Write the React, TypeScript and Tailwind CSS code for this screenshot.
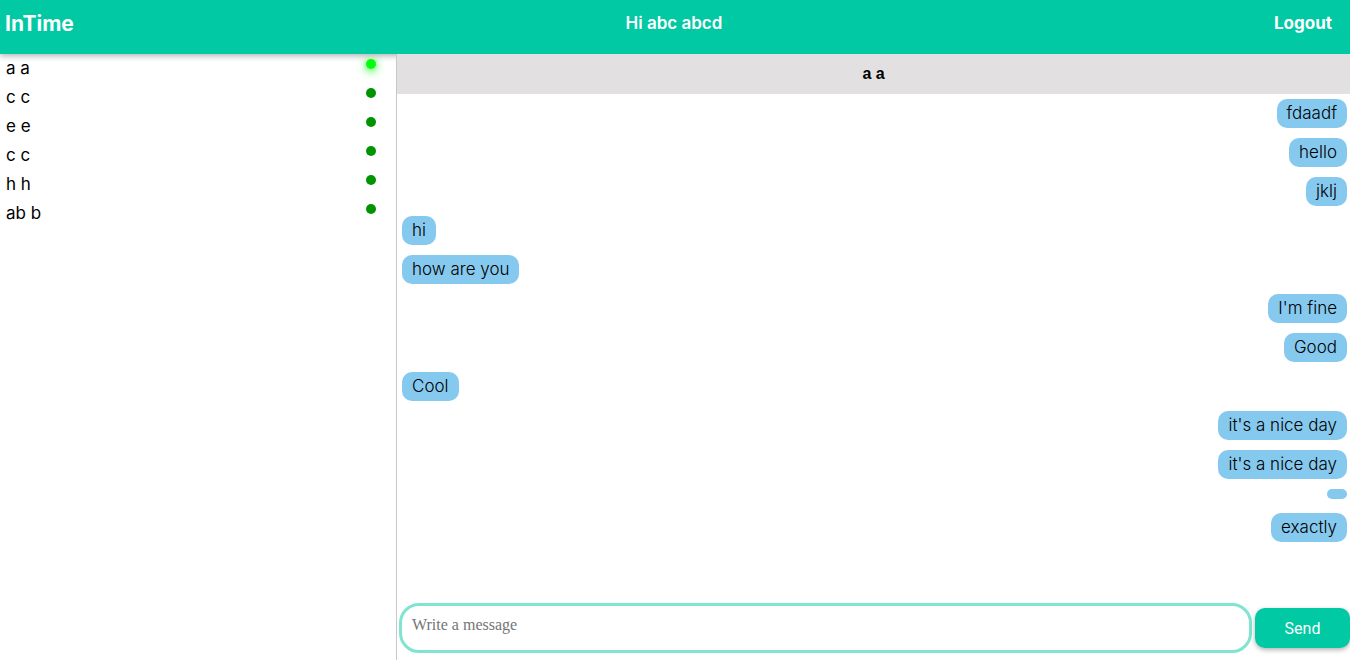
import { useState } from "react";
import type { FormEvent } from "react";

type Contact = { id: number; name: string; online: boolean };
type Message = { id: number; text: string; mine: boolean };

const contacts: Contact[] = [
  { id: 1, name: "a a", online: true },
  { id: 2, name: "c c", online: false },
  { id: 3, name: "e e", online: false },
  { id: 4, name: "c c", online: false },
  { id: 5, name: "h h", online: false },
  { id: 6, name: "ab b", online: false },
];

const initialMessages: Message[] = [
  { id: 1, text: "fdaadf", mine: true },
  { id: 2, text: "hello", mine: true },
  { id: 3, text: "jklj", mine: true },
  { id: 4, text: "hi", mine: false },
  { id: 5, text: "how are you", mine: false },
  { id: 6, text: "I'm fine", mine: true },
  { id: 7, text: "Good", mine: true },
  { id: 8, text: "Cool", mine: false },
  { id: 9, text: "it's a nice day", mine: true },
  { id: 10, text: "it's a nice day", mine: true },
  { id: 11, text: "", mine: true },
  { id: 12, text: "exactly", mine: true },
];

function Header() {
  return (
    <header className="flex h-[54px] shrink-0 items-start justify-between bg-[#00c9a4] pt-3 pr-[18px] pl-[5px] text-white shadow-[0_2px_6px_rgba(0,0,0,0.3)]">
      <h1 className="text-[21px] leading-6 font-bold">InTime</h1>
      <p className="text-[17px] leading-[22px] font-semibold">Hi abc abcd</p>
      <a href="#logout" className="text-[17px] leading-[22px] font-bold">
        Logout
      </a>
    </header>
  );
}

function ContactList() {
  return (
    <nav aria-label="Contacts" className="border-r border-[#c8c8c8]">
      <ul>
        {contacts.map((contact) => (
          <li key={contact.id}>
            <button
              type="button"
              className="flex w-full items-start justify-between py-[5px] pr-5 pl-1.5 text-left text-[17px] leading-[19px] font-normal"
            >
              <span>{contact.name}</span>
              <span
                className={
                  contact.online
                    ? "size-2.5 rounded-full bg-[#00ff0d] shadow-[0_2px_10px_#00ff0d]"
                    : "size-2.5 rounded-full bg-[#009500]"
                }
              />
            </button>
          </li>
        ))}
      </ul>
    </nav>
  );
}

function Bubble({ message }: { message: Message }) {
  return (
    <li className={message.mine ? "flex min-h-3.5 items-start justify-end" : "flex min-h-3.5 items-start"}>
      <p className="rounded-[10px] bg-[#86c9ef] px-2.5 py-[5px] text-[17px] leading-[19px] font-light text-black">
        {message.text}
      </p>
    </li>
  );
}

export default function App() {
  const [messages, setMessages] = useState(initialMessages);
  const [draft, setDraft] = useState("");

  const send = (event: FormEvent) => {
    event.preventDefault();
    setMessages([...messages, { id: messages.length + 1, text: draft, mine: true }]);
    setDraft("");
  };

  return (
    <div className="flex h-screen flex-col bg-white font-['Inter','Liberation_Sans',sans-serif] text-black">
      <Header />
      <main className="grid min-h-0 flex-1 grid-cols-[5fr_12fr]">
        <ContactList />
        <section className="relative flex min-h-0 min-w-0 flex-col">
          <h2 className="bg-[#e2e0e1] text-center font-['Liberation_Sans',sans-serif] text-base leading-10 font-bold">
            a a
          </h2>
          <ul className="flex min-h-0 flex-1 flex-col gap-2.5 overflow-y-auto pt-[5px] pr-[3px] pl-[5px]">
            {messages.map((message) => (
              <Bubble key={message.id} message={message} />
            ))}
          </ul>
          <form onSubmit={send} className="flex shrink-0 items-center gap-[3px] pb-[7px] pl-0.5">
            <textarea
              aria-label="Message"
              placeholder="Write a message"
              value={draft}
              onChange={(event) => setDraft(event.target.value)}
              className="block h-[50px] min-w-0 flex-1 resize-none overflow-hidden rounded-[20px] border-[3px] border-[#80e4d1] p-2.5 font-['Liberation_Serif',serif] text-base leading-[18px] outline-none placeholder:text-[#757575]"
            />
            <button
              type="submit"
              className="h-10 w-[95px] rounded-[10px] bg-[#00c9a4] pt-0.5 font-['Roboto',sans-serif] text-base text-white shadow-[0_2px_5px_rgba(0,0,0,0.3)]"
            >
              Send
            </button>
          </form>
        </section>
      </main>
    </div>
  );
}
